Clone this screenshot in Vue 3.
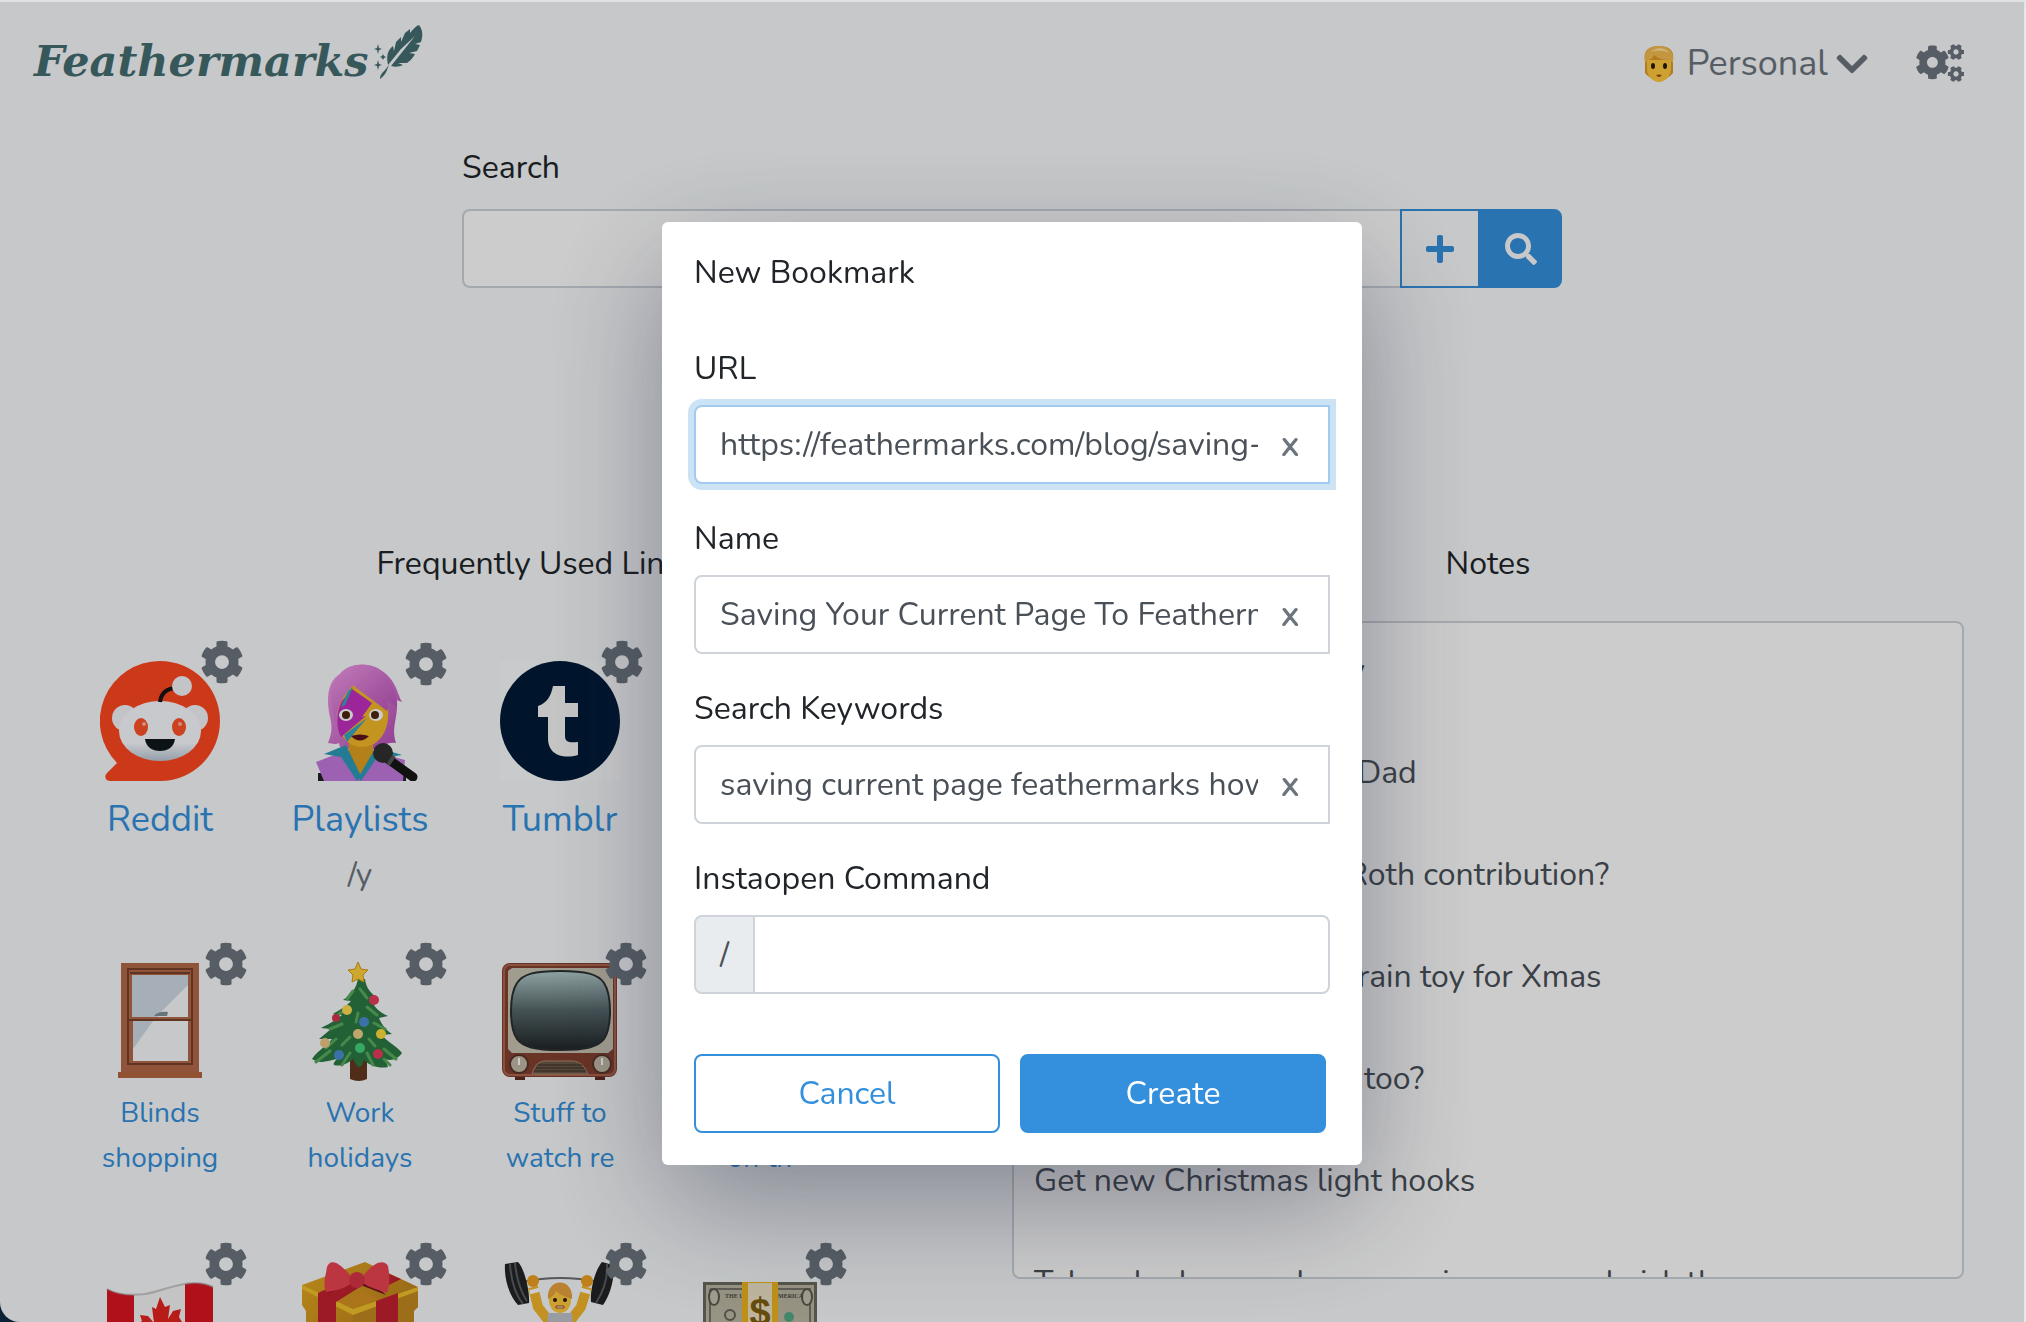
<script setup>
import { ref } from 'vue'

const cog =
  'M487.4 315.7l-42.6-24.6c4.3-23.2 4.3-47 0-70.2l42.6-24.6c4.9-2.8 7.1-8.6 5.5-14-11.1-35.6-30-67.8-54.7-94.6-3.8-4.1-10-5.1-14.8-2.3L380.8 110c-17.9-15.4-38.5-27.3-60.8-35.1V25.8c0-5.6-3.9-10.5-9.4-11.7-36.7-8.2-74.3-7.8-109.2 0-5.5 1.2-9.4 6.1-9.4 11.7V75c-22.2 7.9-42.8 19.8-60.8 35.1L88.7 85.5c-4.9-2.8-11-1.9-14.8 2.3-24.7 26.7-43.6 58.9-54.7 94.6-1.7 5.4.6 11.2 5.5 14L67.3 221c-4.3 23.2-4.3 47 0 70.2l-42.6 24.6c-4.9 2.8-7.1 8.6-5.5 14 11.1 35.6 30 67.8 54.7 94.6 3.8 4.1 10 5.1 14.8 2.3l42.6-24.6c17.9 15.4 38.5 27.3 60.8 35.1v49.2c0 5.6 3.9 10.5 9.4 11.7 36.7 8.2 74.3 7.8 109.2 0 5.5-1.2 9.4-6.1 9.4-11.7v-49.2c22.2-7.9 42.8-19.8 60.8-35.1l42.6 24.6c4.9 2.8 11 1.9 14.8-2.3 24.7-26.7 43.6-58.9 54.7-94.6 1.5-5.5-.7-11.3-5.6-14.1zM256 336c-44.1 0-80-35.9-80-80s35.9-80 80-80 80 35.9 80 80-35.9 80-80 80z'

const links = [
  { icon: 'reddit', label: 'Reddit', image: true },
  { icon: 'singer', label: 'Playlists', command: '/y' },
  { icon: 'tumblr', label: 'Tumblr', image: true },
  { icon: 'none', label: 'News' },
  { icon: 'window', label: 'Blinds shopping', small: true },
  { icon: 'tree', label: 'Work holidays', small: true },
  { icon: 'tv', label: 'Stuff to watch re', small: true },
  { icon: 'none', label: 'Articles on th', small: true },
  { icon: 'flag' },
  { icon: 'gift' },
  { icon: 'lifter' },
  { icon: 'money' },
]

const notes = ref(
  [
    'Send the car reg in July',
    'Birthday present from Dad',
    'How much is best for Roth contribution?',
    'Send a good wooden train toy for Xmas',
    'Cancel all the old plan too?',
    'Get new Christmas light hooks',
    'Take a look around some main ways and pick the one',
  ].join('\n\n')
)

const url = ref('https://feathermarks.com/blog/saving-your-current-page')
const name = ref('Saving Your Current Page To Feathermarks')
const keywords = ref('saving current page feathermarks how to bookmark')
const command = ref('')
const query = ref('')
</script>

<template>
  <div class="page">
    <header class="topbar">
      <a class="logo" href="#">
        <span>Feathermarks</span>
        <svg width="56" height="58" viewBox="0 0 56 58" aria-hidden="true">
          <path fill="currentColor" d="M17 41C15 31 17 26 22 22l1 5 2-9 5-5 0 5 4-9 5-4 0 4C42 5 45 2 48 1c4 5 4 11 2 17l-6 2 5 1-3 6-8 2 6 1c-2 4-5 7-8 9l-9 0 5 2c-4 2-8 2-12 1L44 12 30 25z" />
          <path fill="currentColor" d="M18 41l-4 5c-4 4-5 6-5 9 4-3 6-6 7-9z" />
          <path fill="currentColor" d="M7 20l1 4 3 1-3 1-1 4-1-4-3-1 3-1zM7 36l1 4 3 1-3 1-1 4-1-4-3-1 3-1zM12 30l1 2 2 1-2 1-1 2-1-2-2-1 2-1z" />
        </svg>
      </a>
      <nav class="account">
        <button type="button" class="profile">
          <svg class="face" width="32" height="36" viewBox="0 0 32 36" aria-hidden="true">
            <path fill="#e09a28" d="M2 14C0 3 8 0 16 0s16 3 14 14v13l-3 3-6 4H11l-6-4-3-3z" />
            <path fill="#ffca3e" d="M4 14h24v9c0 7-6 13-12 13S4 30 4 23z" />
            <path fill="#f4bc50" d="M2 17C0 4 8 0 16 0s16 4 14 17l-3-3c-6 0-12-1-16-5-2 4-4 5-6 5z" />
            <path fill="#ffe6a0" d="M8 6c5-5 14-5 18 1-6-3-12-3-18-1z" />
            <ellipse cx="10" cy="20" rx="2" ry="3" fill="#2a1a0a" />
            <ellipse cx="22" cy="20" rx="2" ry="3" fill="#2a1a0a" />
            <path fill="#9a4a16" d="M13 29q3-1 6 0-3 4-6 0z" />
          </svg>
          <span>Personal</span>
          <svg width="32" height="36" viewBox="0 0 448 512" aria-hidden="true">
            <path fill="currentColor" d="M207.029 381.476L12.686 187.132c-9.373-9.373-9.373-24.569 0-33.941l22.667-22.667c9.357-9.357 24.522-9.375 33.901-.04L224 284.505l154.745-154.021c9.379-9.335 24.544-9.317 33.901.04l22.667 22.667c9.373 9.373 9.373 24.569 0 33.941L240.971 381.476c-9.373 9.372-24.569 9.372-33.942 0z" />
          </svg>
        </button>
        <button type="button" class="settings" aria-label="Settings">
          <svg width="48" height="40" viewBox="0 0 48 40" aria-hidden="true">
            <g fill="currentColor">
              <path :d="cog" transform="translate(-1 2) scale(.068)" />
              <path :d="cog" transform="translate(40 9) rotate(30) scale(.033) translate(-256 -256)" />
              <path :d="cog" transform="translate(40 31) rotate(30) scale(.033) translate(-256 -256)" />
            </g>
          </svg>
        </button>
      </nav>
    </header>

    <form class="search" @submit.prevent>
      <label for="query">Search</label>
      <div class="search-row">
        <input id="query" v-model="query" type="text" />
        <button type="button" class="add" aria-label="Add bookmark">
          <svg width="28" height="32" viewBox="0 0 448 512" aria-hidden="true">
            <path fill="currentColor" d="M416 208H272V64c0-17.67-14.33-32-32-32h-32c-17.67 0-32 14.33-32 32v144H32c-17.67 0-32 14.33-32 32v32c0 17.67 14.33 32 32 32h144v144c0 17.67 14.33 32 32 32h32c17.67 0 32-14.33 32-32V304h144c17.67 0 32-14.33 32-32v-32c0-17.67-14.33-32-32-32z" />
          </svg>
        </button>
        <button type="submit" class="go" aria-label="Search">
          <svg width="32" height="32" viewBox="0 0 512 512" aria-hidden="true">
            <path fill="currentColor" d="M505 442.7L405.3 343c-4.5-4.5-10.6-7-17-7H372c27.6-35.3 44-79.7 44-128C416 93.1 322.9 0 208 0S0 93.1 0 208s93.1 208 208 208c48.3 0 92.7-16.4 128-44v16.3c0 6.4 2.5 12.5 7 17l99.7 99.7c9.4 9.4 24.6 9.4 33.9 0l28.3-28.3c9.4-9.4 9.4-24.6.1-34zM208 336c-70.7 0-128-57.2-128-128 0-70.7 57.2-128 128-128 70.7 0 128 57.2 128 128 0 70.7-57.2 128-128 128z" />
          </svg>
        </button>
      </div>
    </form>

    <main class="columns">
      <section>
        <h2>Frequently Used Links</h2>
        <div class="links">
          <div v-for="(link, index) in links" :key="index" class="link" :class="{ small: link.small, image: link.image }">
            <a href="#" :aria-label="link.label || link.icon">
              <svg class="picture" width="120" height="120" viewBox="0 0 120 120" aria-hidden="true">
                <defs>
                  <linearGradient id="pinkHair" x2="1" y2="1"><stop stop-color="#f29be8" /><stop offset="1" stop-color="#b54db5" /></linearGradient>
                  <linearGradient id="screen" x2="0" y2="1"><stop stop-color="#b4cccc" /><stop offset=".5" stop-color="#56676a" /><stop offset="1" stop-color="#202628" /></linearGradient>
                  <linearGradient id="goldBox" x2="1" y2="1"><stop stop-color="#e8aa22" /><stop offset="1" stop-color="#a8701a" /></linearGradient>
                  <linearGradient id="snoo" x2="0" y2="1"><stop offset=".7" stop-color="#fafcff" /><stop offset="1" stop-color="#b9c6d6" /></linearGradient>
                </defs>
                <g v-if="link.icon === 'reddit'">
                  <path fill="#ff4820" d="M60 0a60 60 0 0 1 0 120H10c-5 0-6-5-3-8l10-10A60 60 0 0 1 60 0z" />
                  <circle cx="25" cy="57" r="13" fill="#f4f6fa" />
                  <circle cx="95" cy="57" r="13" fill="#f4f6fa" />
                  <ellipse cx="60" cy="70" rx="41" ry="30" fill="url(#snoo)" />
                  <path d="M60 41q2-14 17-14" fill="none" stroke="#141414" stroke-width="4" />
                  <circle cx="82" cy="25" r="10" fill="#f4f6fa" />
                  <ellipse cx="41" cy="66" rx="7" ry="9" fill="#ff5228" />
                  <ellipse cx="79" cy="66" rx="7" ry="9" fill="#ff5228" />
                  <circle cx="44" cy="63" r="2" fill="#ffb49c" />
                  <circle cx="80" cy="63" r="2" fill="#ffb49c" />
                  <path d="M45 78h30c-1 8-7 12-15 12s-14-4-15-12z" fill="#10181c" />
                </g>
                <g v-else-if="link.icon === 'singer'">
                  <path fill="#222" d="M18 112h88v8H18z" />
                  <path fill="url(#pinkHair)" d="M40 13C48 2 68 0 82 10c14 9 15 22 20 31-2-1-4-1-5-2 1 20-6 26-1 43-10-2-18 6-18 6H46s-6 2-7-6c-4 2-8 0-11 0 3-8 5-14 2-26-4-20-2-36 10-43z" />
                  <path fill="#e0a020" d="M49 80h24v22l-12 18-13-18z" />
                  <path fill="#f4b928" d="M38 50c2-12 10-22 16-26 8 10 24 12 34 24 2 20-8 38-26 38S36 68 38 50z" />
                  <path fill="#c22fc0" d="M42 40l10-12 20 14-10 14 4-1-25 21c-5-8-5-26 1-36z" />
                  <path fill="#38a8c0" d="M48 30l5-4-8 18-4 2zM44 74l23-17-20 24z" />
                  <ellipse cx="46" cy="54" rx="7" ry="6" fill="#fff" /><circle cx="46" cy="54" r="4" fill="#4a2610" />
                  <ellipse cx="76" cy="54" rx="7" ry="6" fill="#fff" /><circle cx="75" cy="54" r="4" fill="#4a2610" />
                  <path fill="#5c1420" d="M51 75q9-3 18 0-9 9-18 0z" />
                  <path fill="url(#pinkHair)" d="M40 13C50 2 72 0 84 12c8 10 12 20 13 34-6-4-8-4-9-6-1 4 0 8-1 10-10-8-22-16-34-26-10 10-16 22-18 36-4-16-8-36 5-47z" />
                  <path fill="#c47ae0" d="M16 101l26-10 19 28 14-28 30 8-2 21H24z" />
                  <path fill="#2c9cb8" d="M24 93l22-9 15 31-4 5-16-24zM76 86l26 8-26 4-15 22-3-3z" />
                  <path stroke="#161616" stroke-width="9" stroke-linecap="round" d="M88 98l25 18" />
                  <circle cx="83" cy="92" r="10" fill="#303030" />
                  <path stroke="#555" stroke-width="4" d="M94 95l-6 9" />
                </g>
                <g v-else-if="link.icon === 'tumblr'">
                  <path fill="#fff" opacity=".5" d="M0 0h120v120H0z" />
                  <circle cx="60" cy="60" r="60" fill="#001a38" />
                  <path fill="#f6f6f6" d="M53 25h12v17h13v14H65v19c0 6 4 7 13 6v13c-14 4-30 1-30-17V56H38V45c9-3 13-10 15-20z" />
                </g>
                <g v-else-if="link.icon === 'window'">
                  <path fill="#b4694a" fill-rule="evenodd" d="M21 2h78v110H21zM32 14v42h56V14zM33 60v40h55V60z" />
                  <path fill="none" stroke="#7a402a" stroke-width="2" d="M28 103V8h64v95zM28 59h64M30 12h60" />
                  <path fill="#c6d2e0" opacity=".8" d="M32 14h56v10L58 54v2H32zM33 60h20L33 88z" />
                  <path fill="#82929a" d="M54 55q4-5 14-4l-1 4z" />
                  <path fill="#b5673f" d="M18 111h84v6H18z" />
                </g>
                <g v-else-if="link.icon === 'tree'">
                  <path fill="#63391f" d="M50 98h17v20q-8 4-17 0z" />
                  <path fill="#2b7a44" d="M58 17c-1 10-7 17-15 22l8 1c-5 6-12 9-18 13l9 1c-7 6-13 9-21 13l10 1-12 10h13c-6 8-13 10-20 20 8 6 18 1 25 0-3 3-4 5-3 6 8 2 14-2 19-6 4 8 6 10 9 6l2-5c6 6 16 9 24 7l-3-8c6 2 12 1 17-6-6-8-14-10-20-18l10-1c-7-5-10-9-13-16l9-2c-9-4-13-8-17-16l8-1c-8-5-13-11-14-20z" />
                  <path fill="none" stroke="#58ac5e" stroke-width="3" stroke-linecap="round" d="M53 30l-6 8M60 28l7 9M47 48l-8 5M67 46l10 8M42 63l-12 5M58 52l-2 9M74 62l11 6M36 78l-10 9M50 76l-8 8M69 78l6 7M30 90l-14 11M50 92l-8 12M67 92l6 12M84 88l12 10M84 98l6 6" />
                  <path fill="#ffd23c" stroke="#d79a16" d="M58 1l3 7 7 1-5 5 1 7-6-3-6 3 1-7-5-5 7-1z" />
                  <circle cx="74" cy="39" r="5" fill="#e63c5c" /><circle cx="47" cy="49" r="5" fill="#ffdc50" /><circle cx="36" cy="57" r="4" fill="#d03650" />
                  <circle cx="64" cy="61" r="5" fill="#4a8ed4" /><circle cx="58" cy="73" r="5" fill="#f0d088" /><circle cx="81" cy="73" r="5" fill="#ffdc3c" />
                  <circle cx="25" cy="82" r="5" fill="#ecca88" /><circle cx="60" cy="87" r="5" fill="#44d27c" /><circle cx="39" cy="94" r="5" fill="#4a8ed4" /><circle cx="78" cy="93" r="5" fill="#e63c5c" />
                </g>
                <g v-else-if="link.icon === 'tv'">
                  <path fill="#5c2c20" d="M15 112h10v7H15zM95 112h10v7H95z" />
                  <rect x="2" y="2" width="115" height="114" rx="8" fill="#84402f" />
                  <rect x="4" y="4" width="111" height="110" rx="6" fill="none" stroke="#ac6650" stroke-width="2" />
                  <path fill="#c9c3b2" d="M8 10l4-3h96l5 3v78l-5 4H12l-4-4z" />
                  <path fill="url(#screen)" stroke="#2b2f30" stroke-width="2" d="M60 10c26 0 38 3 44 12 8 12 8 44 0 56-6 8-18 11-44 11s-37-3-43-11c-8-12-8-44 0-56 6-9 17-12 43-12z" />
                  <path fill="#6c5a48" stroke="#b08874" d="M32 113q3-12 12-13h30q9 1 14 13z" />
                  <path stroke="#3c3028" d="M38 104h44M36 107h48M34 110h52" />
                  <circle cx="19" cy="103" r="9" fill="#c4bba8" stroke="#5a3428" stroke-width="2" /><circle cx="102" cy="103" r="9" fill="#c4bba8" stroke="#5a3428" stroke-width="2" />
                  <path stroke="#fff" stroke-width="2" d="M19 97v7M102 97v7" />
                </g>
                <g v-else-if="link.icon === 'flag'">
                  <path fill="#f6f6f6" d="M7 28q14 8 38 5c20-3 44-18 68-7v94H7z" />
                  <path fill="#dc1420" d="M7 28q12 6 27 6v86H7zM85 23q16-3 28 3v94H85z" />
                  <path fill="#e62420" d="M60 36l5 10 5-2-2 14 5-8 8-2-2 8 3 5-12 12H50L38 63l4-3-2-6 8 1 6 7-2-16 4 2z" />
                  <path fill="none" stroke="#999" stroke-width="2" opacity=".5" d="M7 28q14 8 38 5c20-3 44-18 68-7" />
                </g>
                <g v-else-if="link.icon === 'gift'">
                  <path fill="url(#goldBox)" d="M2 24L65 1l53 25v20l-4 4v70H6V50l-4-6z" />
                  <path fill="#c58a20" d="M53 50l65-24v20l-4 3v71H53z" />
                  <path fill="#f2c22a" d="M2 24l51 24 65-22v4L53 54 2 28z" />
                  <path fill="#d89222" d="M36 40l26-10 16 8-25 9z" />
                  <path fill="#c42030" d="M18 32l30-14 12 8-24 15v79H18zM76 40l22-8v88H76zM65 24l22-12 14 6-20 10z" />
                  <path fill="#7a1622" d="M27 33l20-14 16 6 23 9-20-20z" />
                  <path fill="#ea4452" d="M50 14C38 0 30-2 27 6c-2 12-4 16-1 25 8-1 18-3 26-9zM64 14C74 1 84-2 88 5c2 12 2 18-1 27-8-3-17-5-24-10z" />
                  <circle cx="57" cy="19" r="8" fill="#d93646" />
                </g>
                <g v-else-if="link.icon === 'lifter'">
                  <path fill="none" stroke="#6a6e72" stroke-width="2" d="M22 21q38-8 77 0" />
                  <path fill="#222426" d="M5 3l13-2c6 6 12 28 11 41l-11 2C9 34 4 18 5 3zM102 1l11 3c2 14-3 30-10 40l-12-3c-1-12 4-32 11-40z" />
                  <path fill="none" stroke="#5a5e62" stroke-width="2" d="M10 3c1 16 5 30 13 40M15 2c1 12 5 28 12 38M107 3c1 14-4 28-11 39" />
                  <path fill="none" stroke="#f4b62a" stroke-width="10" d="M33 26l5 20 14 18M87 26l-6 20-14 18" />
                  <path stroke="#fff" stroke-width="10" d="M34 28l1 4M86 28l-1 4" />
                  <circle cx="33" cy="20" r="6" fill="#f0a020" /><circle cx="87" cy="20" r="6" fill="#f0a020" />
                  <path fill="#c0c4c8" d="M48 52h24l6 68H42z" />
                  <ellipse cx="60" cy="39" rx="11" ry="13" fill="#ffca3e" />
                  <path fill="#e8a23c" d="M48 38c-2-22 26-22 24 0-6-2-12-4-16-8-2 4-4 6-8 8z" />
                  <circle cx="55" cy="39" r="2" fill="#2a1a0a" /><circle cx="65" cy="39" r="2" fill="#2a1a0a" /><path fill="#fff" stroke="#9a4a16" d="M56 45h8v2h-8z" />
                </g>
                <g v-else-if="link.icon === 'money'">
                  <path fill="#6c6a5e" d="M3 21h114v99H3z" />
                  <path fill="#bdb9a4" d="M6 24h108v96H6z" />
                  <path fill="none" stroke="#77746a" stroke-width="2" d="M10 28h100v92M10 28v92" />
                  <ellipse cx="14" cy="36" rx="5" ry="8" fill="#c9c5b2" stroke="#5c5a50" stroke-width="2" /><ellipse cx="107" cy="36" rx="5" ry="8" fill="#c9c5b2" stroke="#5c5a50" stroke-width="2" />
                  <circle cx="30" cy="54" r="5" fill="none" stroke="#66645a" stroke-width="2" /><circle cx="89" cy="56" r="5" fill="#54a884" />
                  <text x="25" y="37" font-size="6" font-family="Liberation Serif, serif" font-weight="700" fill="#4c4a42">THE UN</text>
                  <text x="78" y="37" font-size="6" font-family="Liberation Serif, serif" font-weight="700" fill="#4c4a42">MERICA</text>
                  <path fill="#efb51e" d="M42 21h36v99H42z" />
                  <path fill="#efe3c6" d="M48 22h24v98H48z" />
                  <text x="60" y="64" font-size="38" font-family="Liberation Sans, sans-serif" font-weight="700" text-anchor="middle" fill="#80600e">$</text>
                </g>
              </svg>
              <span v-if="link.label" class="label">{{ link.label }}</span>
            </a>
            <span v-if="link.command" class="command">{{ link.command }}</span>
            <button type="button" class="gear" :aria-label="'Edit ' + (link.label || link.icon)">
              <svg width="44" height="44" viewBox="0 0 512 512" aria-hidden="true"><path fill="currentColor" :d="cog" /></svg>
            </button>
          </div>
        </div>
      </section>

      <section>
        <h2><label for="notes">Notes</label></h2>
        <textarea id="notes" v-model="notes"></textarea>
      </section>
    </main>
  </div>

  <div class="backdrop">
    <form class="dialog" role="dialog" aria-labelledby="dialog-title" @submit.prevent>
      <h1 id="dialog-title">New Bookmark</h1>
      <div class="field">
        <label for="url">URL</label>
        <div class="box">
          <input id="url" v-model="url" class="active" type="text" />
          <button type="button" class="clear" aria-label="Clear URL" @click="url = ''">x</button>
        </div>
      </div>
      <div class="field">
        <label for="name">Name</label>
        <div class="box">
          <input id="name" v-model="name" type="text" />
          <button type="button" class="clear" aria-label="Clear name" @click="name = ''">x</button>
        </div>
      </div>
      <div class="field">
        <label for="keywords">Search Keywords</label>
        <div class="box">
          <input id="keywords" v-model="keywords" type="text" />
          <button type="button" class="clear" aria-label="Clear keywords" @click="keywords = ''">x</button>
        </div>
      </div>
      <div class="field">
        <label for="command">Instaopen Command</label>
        <div class="box">
          <span class="prefix">/</span>
          <input id="command" v-model="command" class="after-prefix" type="text" />
        </div>
      </div>
      <div class="actions">
        <button type="button" class="cancel">Cancel</button>
        <button type="submit" class="create">Create</button>
      </div>
    </form>
  </div>
</template>

<style>
body {
  margin: 0;
  background: #0a2136;
}

*,
*::before,
*::after {
  box-sizing: border-box;
}
</style>

<style scoped>
.page,
.backdrop {
  font-family: Nunito, Lato, "Noto Sans", sans-serif;
  font-size: 32px;
  line-height: 52px;
  color: #212529;
}

.page {
  height: 100vh;
  overflow: hidden;
  background: #f8fafc;
  border-top: 2px solid #dfe2e5;
  border-right: 2px solid #e4e6e8;
  border-bottom-left-radius: 20px;
}

button,
input,
textarea {
  font: inherit;
  margin: 0;
}

button {
  padding: 0;
  border: 0;
  background: none;
  color: inherit;
}

svg {
  display: block;
  flex: none;
}

h1,
h2 {
  margin: 0;
  font: inherit;
}

.topbar {
  display: flex;
  justify-content: space-between;
  align-items: flex-start;
  height: 140px;
  padding: 22px 60px 0 34px;
}

.logo {
  display: flex;
  gap: 2px;
  color: #456e72;
  text-decoration: none;
  font-family: "DejaVu Serif", serif;
  font-weight: 700;
  font-style: italic;
  font-size: 43px;
  line-height: 74px;
}

.account,
.profile {
  display: flex;
  align-items: center;
}

.account {
  gap: 48px;
  height: 78px;
  color: #6c757d;
  font-size: 36px;
}

.profile {
  gap: 8px;
  padding-top: 2px;
}

.face {
  margin-right: 4px;
}

.search {
  width: 1100px;
  max-width: 100%;
  margin: 0 auto;
}

.search label {
  display: block;
  margin-bottom: 15px;
}

.search-row {
  display: flex;
  height: 79px;
}

.search-row input {
  flex: 1;
  min-width: 0;
  padding: 0 24px;
  background: #fff;
  border: 2px solid #ced4da;
  border-right: 0;
  border-radius: 8px 0 0 8px;
}

.search-row button {
  display: flex;
  align-items: center;
  justify-content: center;
  border: 2px solid #3490dc;
}

.add {
  width: 80px;
  color: #3490dc;
}

.go {
  width: 82px;
  color: #f8fafc;
  background: #3490dc;
  border-radius: 0 8px 8px 0;
}

.columns {
  display: grid;
  grid-template-columns: 1fr 1fr;
  padding: 250px 60px 0;
}

h2 {
  text-align: center;
}

.links {
  display: grid;
  grid-template-columns: repeat(auto-fill, 200px);
  grid-auto-rows: 300px;
  padding-top: 51px;
}

.link {
  position: relative;
  padding: 20px 40px 0;
  text-align: center;
}

.link a {
  display: flex;
  flex-direction: column;
  align-items: center;
  gap: 10px;
  color: #3490dc;
  text-decoration: none;
}

.label {
  font-size: 36px;
  line-height: 58px;
}

.small .label {
  font-size: 28px;
  line-height: 45px;
}

.command {
  color: #6c757d;
}

.gear {
  position: absolute;
  top: 1px;
  right: 12px;
  color: #6c757d;
}

.image .gear {
  top: -1px;
  right: 16px;
}

textarea {
  display: block;
  width: 100%;
  height: 658px;
  margin-top: 31px;
  padding: 22px 20px;
  overflow: hidden;
  resize: none;
  line-height: 51px;
  color: #495057;
  background: #fff;
  border: 2px solid #ced4da;
  border-radius: 8px;
}

.backdrop {
  position: fixed;
  inset: 2px 2px 0 0;
  display: flex;
  justify-content: center;
  align-items: flex-start;
  padding-top: 220px;
  background: rgba(0, 0, 0, 0.2);
  border-bottom-left-radius: 20px;
}

.dialog {
  width: 700px;
  padding: 25px 32px 32px;
  background: #fff;
  border-radius: 6px;
  box-shadow: 0 40px 120px -4px rgba(27, 33, 58, 0.4);
}

.dialog h1 {
  margin-bottom: 44px;
}

.field {
  margin-bottom: 29px;
}

.field label {
  display: block;
  margin-bottom: 10px;
}

.box {
  position: relative;
  display: flex;
  height: 79px;
}

.box input {
  flex: 1;
  min-width: 0;
  padding: 0 70px 0 24px;
  color: #495057;
  background: #fff;
  border: 2px solid #ced4da;
  border-radius: 8px 0 0 8px;
  outline: 0;
}

.box .active,
.box input:focus {
  border-color: #a1cbef;
  box-shadow: 0 0 0 6px rgba(52, 144, 220, 0.25);
}

.box .after-prefix {
  padding: 0 24px;
  border-left: 0;
  border-radius: 0 8px 8px 0;
}

.prefix {
  display: flex;
  align-items: center;
  justify-content: center;
  width: 61px;
  color: #495057;
  background: #e9ecef;
  border: 2px solid #ced4da;
  border-radius: 8px 0 0 8px;
}

.clear {
  position: absolute;
  top: 0;
  right: 20px;
  width: 40px;
  height: 79px;
  color: #6c757d;
  font-size: 36px;
  font-weight: 600;
}

.actions {
  display: grid;
  grid-template-columns: 1fr 1fr;
  gap: 20px;
  padding: 31px 4px 0 0;
}

.actions button {
  height: 79px;
  border: 2px solid #3490dc;
  border-radius: 8px;
}

.cancel {
  color: #3490dc;
}

.create {
  color: #fff;
  background: #3490dc;
}
</style>
